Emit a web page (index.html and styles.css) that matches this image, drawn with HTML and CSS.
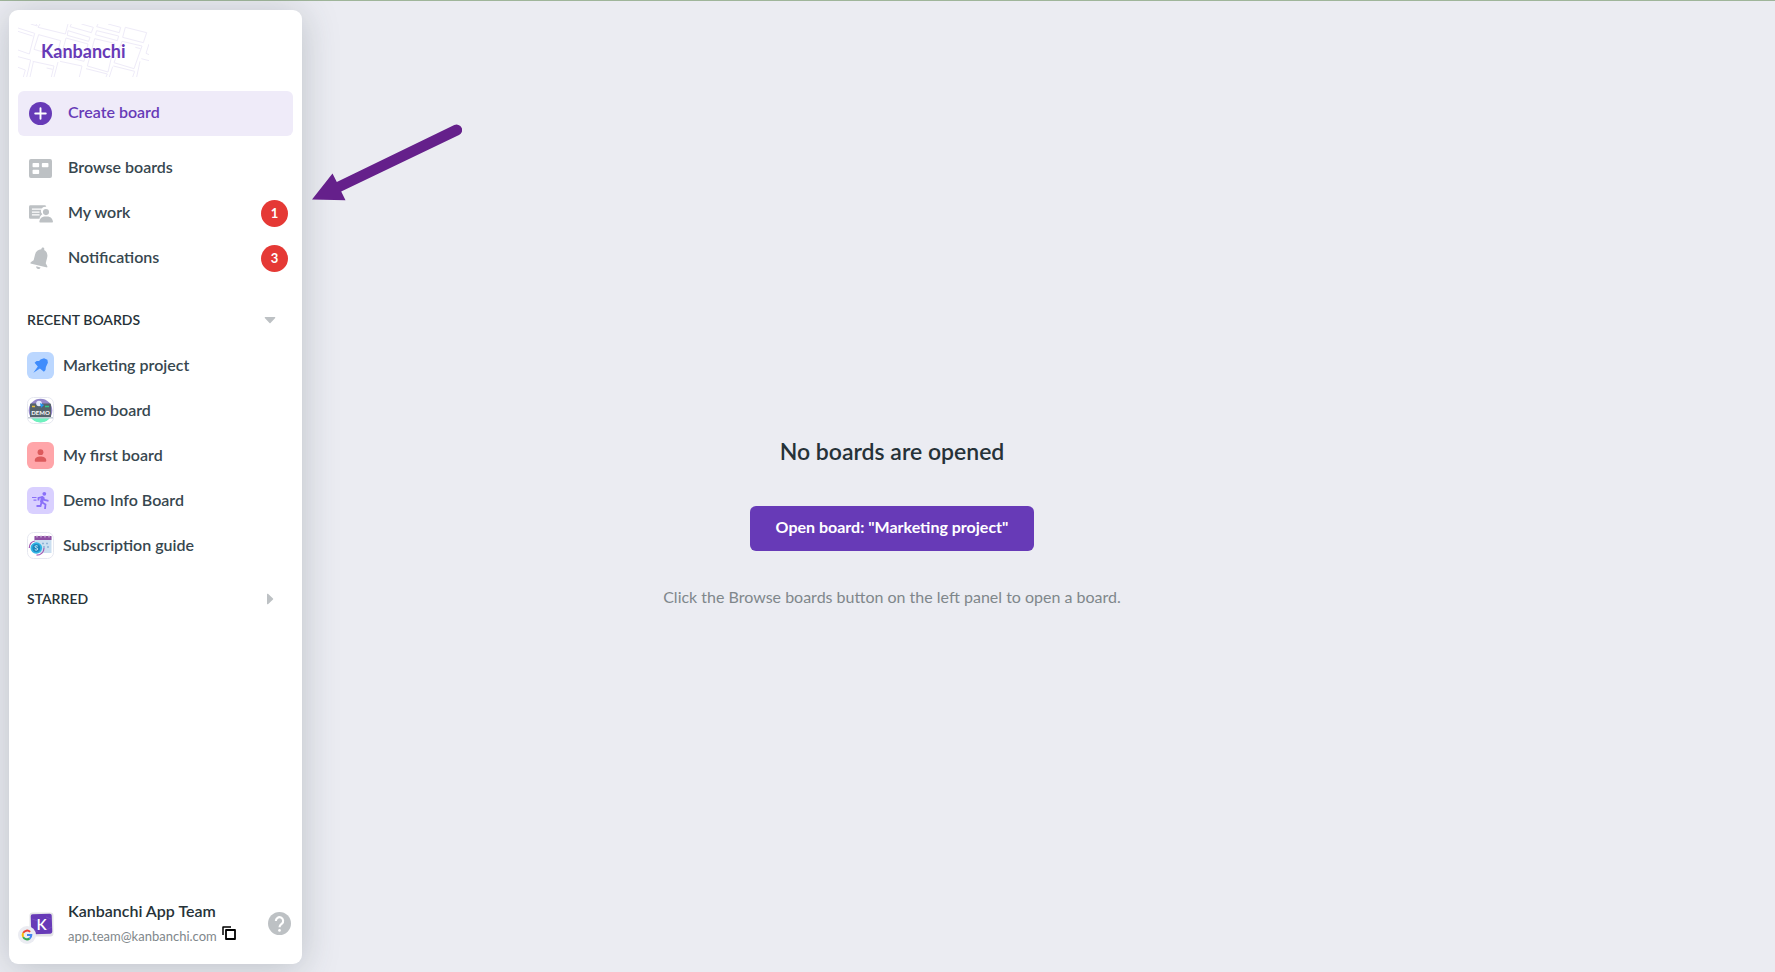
FILE: index.html
```
<!DOCTYPE html>
<html lang="en">
<head>
<meta charset="utf-8">
<title>Kanbanchi</title>
<link rel="stylesheet" href="styles.css">
</head>
<body>
<div class="app">
  <aside class="sidebar">
    <a class="brand" href="#">
      <svg class="brand-map" viewBox="0 0 393 159" fill="none" stroke="#eeebf8" stroke-width="3" stroke-linejoin="round" aria-hidden="true">
        <path d="M0 12 50 28 34 90 0 78M0 22 44 36M38 0 58 6 54 0M66 0 60 10 142 30 150 0M62 32 128 50 116 96 48 76ZM0 98 38 108 26 159M0 130 22 138 16 159M44 112 108 126 100 159M36 159 46 114M160 0 156 8 220 26 226 10 190 0M150 20 216 40 212 52 148 34ZM144 42 210 60 198 112 130 94ZM126 112 192 126 184 159M108 159 120 114M240 0 236 8 304 26 308 10 270 0M236 20 302 36 298 50 232 32ZM230 44 290 58 270 144 208 126ZM204 134 268 150 264 159M322 10 386 26 376 56 314 40ZM312 52 372 66 348 134 288 116ZM286 126 350 142 344 159M274 159 284 128M393 60 384 88 393 92M370 104 393 110M366 112 356 159M86 132 104 136M352 70 368 74"/>
      </svg>
      <span class="brand-name">Kanbanchi</span>
    </a>

    <button class="create" type="button">
      <svg class="icon" viewBox="0 0 24 24" aria-hidden="true"><circle cx="12" cy="12" r="12" fill="#673ab7"/><path d="M12 6.5v11M6.500 12h11" stroke="#fff" stroke-width="2" stroke-linecap="round"/></svg>
      <span>Create board</span>
    </button>

    <nav class="menu" aria-label="Main">
      <a class="menu-item" href="#">
        <svg class="icon" viewBox="0 0 24 24" aria-hidden="true"><path fill="#bdc1c4" fill-rule="evenodd" d="M2 2.200h20a2 2 0 0 1 2 2v15.600a2 2 0 0 1-2 2H2a2 2 0 0 1-2-2V4.200a2 2 0 0 1 2-2ZM4.500 6.200a.8.8 0 0 0-.8.8v2.800c0 .4.400.8.800.8h5.300c.4 0 .8-.4.800-.8V7a.8.8 0 0 0-.8-.8ZM14.200 6.200a.8.8 0 0 0-.8.8v2.800c0 .4.400.8.800.8h5.300c.4 0 .8-.4.800-.8V7a.8.8 0 0 0-.8-.8ZM4.500 13.400a.8.8 0 0 0-.8.8V17c0 .4.400.8.800.8h5.300c.4 0 .8-.4.800-.8v-2.800a.8.8 0 0 0-.8-.8Z"/></svg>
        <span>Browse boards</span>
      </a>
      <a class="menu-item" href="#">
        <svg class="icon wide" viewBox="0 0 25 24" aria-hidden="true"><g fill="#bdc1c4"><path d="M1.500 3.500h15.200a1.400 1.400 0 0 1 1.200 1.500 4.600 4.600 0 0 0-4 7.900c-1.400.9-2.600 2.300-3 4.600H1.500A1.400 1.400 0 0 1 0 16V5a1.500 1.500 0 0 1 1.500-1.500Z"/><circle cx="17.700" cy="10.500" r="3.200"/><path d="M11.500 21.500c-.5 0-.8-.3-.7-.8.300-3.200 2.600-5.500 6-5.500h2.200c3.400 0 5.700 2.300 6 5.500 0 .5-.3.800-.7.800Z"/></g><path d="M3 7.500h11M3 10.500h8M3 13.500h8" stroke="#fff" stroke-width="1.200"/></svg>
        <span>My work</span>
        <span class="badge">1</span>
      </a>
      <a class="menu-item" href="#">
        <svg class="icon" viewBox="0 0 24 24" aria-hidden="true"><g fill="#bdc1c4" transform="rotate(14 12 12)"><path d="M12 .2c.9 0 1.500.7 1.500 1.500v.8c3.200.8 5 3.500 5 6.800v6.200l2.500 2.800v1.200H3v-1.200l2.500-2.800V9.300c0-3.300 1.800-6 5-6.800v-.8c0-.8.6-1.500 1.500-1.500Z"/><path d="M9.700 21h4.600a2.300 2.300 0 0 1-4.600 0Z"/></g></svg>
        <span>Notifications</span>
        <span class="badge">3</span>
      </a>
    </nav>

    <section class="group">
      <button class="group-head" type="button" aria-expanded="true">
        <span>RECENT BOARDS</span>
        <svg class="caret" viewBox="0 0 12 12" aria-hidden="true"><path d="M1.200 3h9.600a.6.6 0 0 1 .4 1L6.500 9a.7.7 0 0 1-1 0L.8 4a.6.6 0 0 1 .4-1Z" fill="#bdc1c4"/></svg>
      </button>
      <ul class="boards">
        <li><a class="board" href="#">
          <svg class="thumb" viewBox="0 0 27 27" aria-hidden="true"><rect width="27" height="27" rx="6" fill="#bbd7ff"/><path d="M13.500 7.500 17 6.200l3.400 1.500.5 3-2 4.200-.4 3.100-1.600 1.800-4-3.400-6.500 4.300 4.400-6.200-3.200-3.800 2-1.600 2.500-.1Z" fill="#3f8cfc"/></svg>
          <span>Marketing project</span></a></li>
        <li><a class="board" href="#">
          <svg class="thumb" viewBox="0 0 27 27" aria-hidden="true"><rect x=".5" y=".5" width="26" height="26" rx="6" fill="#fff" stroke="#e6e8f0"/><circle cx="13.500" cy="13.500" r="11.800" fill="#9387c8"/><path d="M3 19h21a11.800 11.800 0 0 1-21 0Z" fill="#6df2bd"/><rect x="3" y="6.500" width="21" height="14" rx="1" fill="#55626c"/><path d="M1 20h25v1.500H1Z" fill="#c3cbd5"/><path d="M5 9.500h3" stroke="#e5bf3c" stroke-width="1.500"/><path d="M18 9.500h4" stroke="#34c786" stroke-width="1.500"/><circle cx="12" cy="6.500" r="2.800" fill="#e6eafd"/><path d="m13 6 4 2-3 3Z" fill="#2196f3"/><text class="demo-label" x="13.500" y="17.500" text-anchor="middle">DEMO</text></svg>
          <span>Demo board</span></a></li>
        <li><a class="board" href="#">
          <svg class="thumb" viewBox="0 0 27 27" aria-hidden="true"><rect width="27" height="27" rx="6" fill="#ffa5a9"/><g fill="#dc5a5c"><circle cx="13.500" cy="10.200" r="2.900"/><path d="M7.700 18.800c0-3 2.700-4.300 5.800-4.300s5.800 1.300 5.800 4.300c0 .6-.4.900-1 .9H8.700c-.6 0-1-.3-1-.9Z"/></g></svg>
          <span>My first board</span></a></li>
        <li><a class="board" href="#">
          <svg class="thumb" viewBox="0 0 27 27" aria-hidden="true"><rect width="27" height="27" rx="6" fill="#d9d0ff"/><g stroke="#8a70f8" fill="none" stroke-width="1.800"><path d="M5 10.500h4.500M6.500 13.200h3" stroke-width="1.200"/><path d="M11.500 13.500v-2.500l4-1 2 3 4 .8"/><path d="M16 10.500 14.500 15l4 2.500-.5 4.500"/><path d="M14.500 15.500l-1 3.500H9.500"/></g><path d="m14 9.500 3.500.5-1.500 6-3-1Z" fill="#8a70f8"/><circle cx="17.300" cy="6.800" r="1.900" fill="#8a70f8"/></svg>
          <span>Demo Info Board</span></a></li>
        <li><a class="board" href="#">
          <svg class="thumb" viewBox="0 0 27 27" aria-hidden="true"><rect x=".5" y=".5" width="26" height="26" rx="6" fill="#fff" stroke="#e6e8f0"/><path d="M7.500 5h17v16h-17Z" fill="#cbdff0"/><path d="M7.500 4h17v4h-17Z" fill="#8e4fa3"/><path d="M10 3v2.500M14 3v2.500M18 3v2.500M22 3v2.500" stroke="#dccfe8"/><path d="M15 11.500h8M16 15h7" stroke="#8db3d5" stroke-width="1.500" stroke-dasharray="2 2"/><circle cx="9.300" cy="16" r="5.800" fill="#31b4e4"/><circle cx="9.300" cy="16" r="3.900" fill="#1b86bd"/><path d="M10.700 14.200c-1-.8-2.700-.5-2.700.6s2.700.9 2.700 2.200-1.900 1.400-2.900.5" fill="none" stroke="#d7f2ff"/><path d="M2.300 16c0-4 2-6.200 5.500-7M17 16c0 4-3 7.200-7.500 7.200" fill="none" stroke="#a45bb3" stroke-width="1.200"/></svg>
          <span>Subscription guide</span></a></li>
      </ul>
    </section>

    <section class="group starred">
      <button class="group-head" type="button" aria-expanded="false">
        <span>STARRED</span>
        <svg class="caret" viewBox="0 0 12 12" aria-hidden="true"><path d="M3 1.200v9.600a.6.6 0 0 0 1 .4L9 6.500a.7.7 0 0 0 0-1L4 .8a.6.6 0 0 0-1 .4Z" fill="#bdc1c4"/></svg>
      </button>
    </section>

    <footer class="account">
      <svg class="avatar" viewBox="0 0 38 36" aria-hidden="true">
        <rect x="11.500" y="2.500" width="24" height="24" rx="3" fill="#e3e3e6"/><rect x="13" y="4" width="21" height="20" rx="2" fill="#673ab7" transform="rotate(-2 23 14)"/><path d="M14 9l6 2M15 19l5 3M28 7l5 2M28 20l6-3" stroke="#7d55c4" stroke-width=".6"/><text class="avatar-letter" x="23.500" y="19.500" text-anchor="middle">K</text>
        <circle cx="9" cy="25" r="9" fill="#ebecf2"/>
        <g fill="none" stroke-width="2"><path d="M12.100 21.900a4.300 4.300 0 0 0-6.900 1" stroke="#ea4335"/><path d="M5.200 22.900a4.300 4.300 0 0 0 0 4.200" stroke="#fbbc05"/><path d="M5.200 27.100a4.300 4.300 0 0 0 6.500 1.300" stroke="#34a853"/><path d="M11.700 28.400A4.300 4.300 0 0 0 13.300 25H9" stroke="#4285f4"/></g>
      </svg>
      <div class="account-text">
        <strong class="account-name">Kanbanchi App Team</strong>
        <span class="account-mail">app.team@kanbanchi.com<button class="copy" type="button" aria-label="Copy email"><svg viewBox="0 0 14 14" fill="none" stroke="#000" stroke-width="1.800" stroke-linejoin="round" aria-hidden="true"><path d="M4 4h9v9H4Z"/><path d="M1 9V1h8" stroke-width="1.500"/></svg></button></span>
      </div>
      <button class="help" type="button" aria-label="Help"><svg viewBox="0 0 24 24" aria-hidden="true"><circle cx="12" cy="12" r="12" fill="#bdc1c4"/><path d="M8.200 9.300a3.800 3.800 0 1 1 6.300 2.800c-1.500 1.200-2.500 1.800-2.500 3.900" fill="none" stroke="#fff" stroke-width="2.200"/><circle cx="12" cy="19.200" r="1.400" fill="#fff"/></svg></button>
    </footer>
  </aside>

  <main class="empty">
    <h1 class="empty-title">No boards are opened</h1>
    <button class="open" type="button">Open board: "Marketing project"</button>
    <p class="empty-hint">Click the Browse boards button on the left panel to open a board.</p>
  </main>
</div>
<svg class="pointer" viewBox="0 0 150 78" aria-hidden="true"><path d="M0 76.500 20.500 50.500 24.800 59 142.300 2.100A5.200 5.200 0 0 1 147 12L29.200 68.500 33.500 77.200Z" fill="#65208b"/></svg>
</body>
</html>
```
FILE: styles.css
```
* {
  box-sizing: border-box;
}

body {
  margin: 0;
  background: #ebecf2;
  color: #37474f;
  font-family: Lato, "Liberation Sans", sans-serif;
  font-size: 16px;
  line-height: 24px;
}

button {
  border: 0;
  padding: 0;
  background: none;
  color: inherit;
  font: inherit;
  cursor: pointer;
}

a {
  color: inherit;
  text-decoration: none;
}

.app {
  display: grid;
  grid-template-columns: 293px 1fr;
  min-height: 100vh;
  padding: 9px 0 8px 9px;
  border-top: 1px solid #9fb59a;
}

.sidebar {
  grid-area: 1 / 1;
  z-index: 1;
  display: flex;
  flex-direction: column;
  padding: 14px 9px 16px;
  border-radius: 9px;
  background: #fff;
  box-shadow: 0 4px 36px rgba(55, 71, 79, 0.26);
}

.brand {
  display: grid;
  width: 131px;
}

.brand-map {
  grid-area: 1 / 1;
  width: 131px;
  height: 53px;
}

.brand-name {
  grid-area: 1 / 1;
  padding: 15px 0 0 23px;
  color: #673ab7;
  font-size: 18px;
  font-weight: 700;
}

.create {
  display: flex;
  align-items: center;
  gap: 16px;
  height: 45px;
  margin: 14px 0 10px;
  padding: 0 11px;
  border-radius: 6px;
  background: #efebf9;
  color: #673ab7;
  font-weight: 600;
}

.icon {
  flex: none;
  width: 23px;
  height: 23px;
}

.icon.wide {
  width: 24px;
  margin-right: -1px;
}

.create span,
.menu-item span:not(.badge) {
  padding-bottom: 4px;
}

.board span {
  padding-bottom: 2px;
}

.menu-item {
  display: flex;
  align-items: center;
  gap: 16px;
  height: 45px;
  padding: 0 5px 0 11px;
  font-weight: 600;
}

.badge {
  width: 27px;
  height: 27px;
  margin-left: auto;
  border-radius: 50%;
  background: #e53935;
  color: #fff;
  font-size: 13px;
  font-weight: 700;
  line-height: 27px;
  text-align: center;
}

.group {
  margin-top: 21px;
}

.group-head {
  display: flex;
  align-items: center;
  justify-content: space-between;
  width: 100%;
  height: 36px;
  padding: 0 17px 0 9px;
  color: #263238;
  font-size: 14px;
  font-weight: 600;
}

.caret {
  width: 12px;
  height: 12px;
}

.boards {
  margin: 5px 0 0;
  padding: 0;
  list-style: none;
}

.board {
  display: flex;
  align-items: center;
  gap: 9px;
  height: 45px;
  padding: 0 9px;
  font-weight: 600;
}

.thumb {
  width: 27px;
  height: 27px;
}

.demo-label {
  fill: #fff;
  font-size: 6px;
  font-weight: 700;
}

.starred {
  margin-top: 13px;
}

.account {
  display: flex;
  align-items: center;
  margin-top: auto;
  padding-right: 2px;
}

.avatar {
  width: 38px;
  height: 36px;
  margin-top: 9px;
}

.avatar-letter {
  fill: #fff;
  font-size: 15px;
  font-weight: 600;
}

.account-text {
  display: flex;
  flex-direction: column;
  gap: 1px;
  margin-left: 12px;
}

.account-name {
  color: #263238;
  font-weight: 600;
}

.account-mail {
  display: flex;
  align-items: center;
  gap: 5px;
  color: #7f878b;
  font-size: 13px;
}

.copy,
.help {
  display: flex;
}

.copy {
  padding-bottom: 6px;
}

.copy svg {
  width: 14px;
  height: 14px;
}

.help {
  margin-left: auto;
}

.help svg {
  width: 23px;
  height: 23px;
}

.empty {
  grid-area: 1 / 1 / 2 / 3;
  display: flex;
  flex-direction: column;
  align-items: center;
  justify-content: center;
  padding-top: 70px;
}

.empty-title {
  margin: 0;
  color: #263238;
  font-size: 23px;
  font-weight: 600;
  line-height: 32px;
}

.open {
  height: 45px;
  margin: 39px 0 34px;
  padding: 0 26px 4px;
  border-radius: 6px;
  background: #673ab7;
  color: #fff;
  font-weight: 700;
}

.empty-hint {
  margin: 0;
  color: #7f878b;
}

.pointer {
  position: absolute;
  z-index: 2;
  top: 123px;
  left: 312px;
  width: 150px;
  height: 78px;
}
```
